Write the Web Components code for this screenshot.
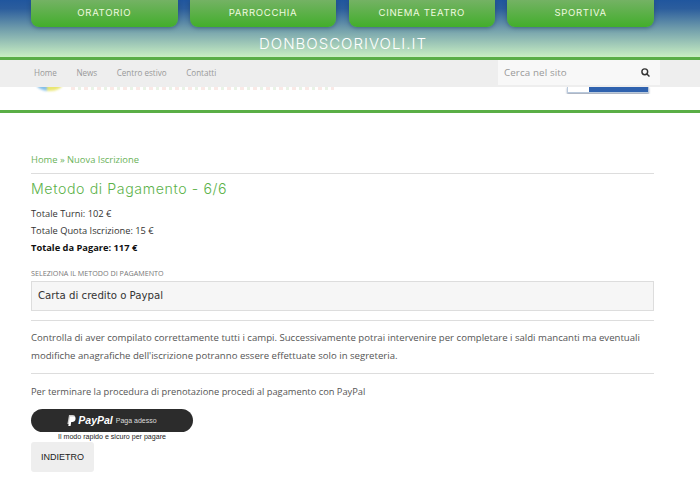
<!DOCTYPE html>
<html lang="it">
<head>
<meta charset="utf-8">
<title>Nuova Iscrizione</title>
<style>
  html, body { margin: 0; background: #fff; }
  body { font-family: "Open Sans", sans-serif; }
</style>
</head>
<body>
<site-top>
  <section-tab>ORATORIO</section-tab>
  <section-tab>PARROCCHIA</section-tab>
  <section-tab>CINEMA TEATRO</section-tab>
  <section-tab>SPORTIVA</section-tab>
</site-top>
<site-nav></site-nav>
<logo-strip></logo-strip>
<payment-page></payment-page>

<script>
class SiteTop extends HTMLElement {
  connectedCallback() {
    this.attachShadow({ mode: 'open' });
    this.shadowRoot.innerHTML = `
      <style>
        :host {
          display: block;
          height: 57px;
          background: linear-gradient(#20569e 0%, #2b5d9d 15%, #6f9cab 50%, #c9efc2 100%);
          border-bottom: 3px solid #5aae46;
        }
        .tabs {
          display: grid;
          grid-template-columns: repeat(4, 146.5px);
          column-gap: 12.3px;
          padding-left: 31px;
        }
        .domain {
          margin-left: 259px;
          margin-top: 8px;
          font: 300 15px/18px "Inter", "DejaVu Sans", sans-serif;
          color: #fff;
          letter-spacing: 1px;
        }
      </style>
      <div class="tabs"><slot></slot></div>
      <div class="domain">DONBOSCORIVOLI.IT</div>
    `;
  }
}

class SectionTab extends HTMLElement {
  connectedCallback() {
    this.attachShadow({ mode: 'open' });
    this.shadowRoot.innerHTML = `
      <style>
        :host {
          display: block;
          height: 27px;
          text-align: center;
          color: #eefadf;
          font: 400 9.6px/25px "Inter", "DejaVu Sans", sans-serif;
          letter-spacing: 0.65px;
          background: linear-gradient(#74b264, #42ae2b);
          border-radius: 0 0 8px 8px;
          box-shadow: 0 1px 4px rgba(30, 60, 90, .55);
        }
      </style>
      <slot></slot>
    `;
  }
}

class SiteNav extends HTMLElement {
  connectedCallback() {
    this.attachShadow({ mode: 'open' });
    this.shadowRoot.innerHTML = `
      <style>
        :host {
          display: flex;
          justify-content: space-between;
          position: relative;
          z-index: 1;
          height: 27px;
          background: #eee;
          padding-left: 34px;
          padding-right: 40px;
          font: 8.1px/25px "Open Sans", sans-serif;
          color: #999;
        }
        nav { display: flex; gap: 19.5px; }
        .search {
          width: 162px;
          height: 25px;
          background: #f8f8f8;
          display: flex;
          justify-content: space-between;
          align-items: center;
          padding: 0 10px 0 6px;
          box-sizing: border-box;
          font-size: 9.8px;
          color: #999;
          letter-spacing: .1px;
        }
        svg { display: block; }
      </style>
      <nav><span>Home</span><span>News</span><span>Centro estivo</span><span>Contatti</span></nav>
      <div class="search">
        <span>Cerca nel sito</span>
        <svg width="9" height="9" viewBox="0 0 10 10" fill="none" stroke="#333" stroke-width="1.6">
          <circle cx="4.2" cy="4.2" r="3.2"/><path d="M6.6 6.6 9.4 9.4"/>
        </svg>
      </div>
    `;
  }
}

class LogoStrip extends HTMLElement {
  connectedCallback() {
    this.attachShadow({ mode: 'open' });
    this.shadowRoot.innerHTML = `
      <style>
        :host {
          display: block;
          height: 23px;
          background: #fff;
          border-bottom: 3px solid #5aae46;
          overflow: hidden;
        }
        .row {
          display: flex;
          align-items: flex-start;
          height: 7px;
          overflow: hidden;
          padding-left: 36px;
          background: #fff;
        }
        .mark {
          width: 27px;
          height: 16px;
          margin-top: -12px;
          border-radius: 50%;
          background: linear-gradient(90deg, #6fb4e6 0 42%, #e5e25a 42% 100%);
          filter: blur(1px);
          opacity: .85;
        }
        .fade {
          margin-left: 8px;
          width: 263px;
          height: 3px;
          background: repeating-linear-gradient(90deg, #fae9e6 0 4px, #fff 4px 7px, #e9f3e6 7px 10px, #fff 10px 13px);
          filter: blur(.6px);
        }
        .btn {
          margin-left: auto;
          margin-right: 51px;
          width: 82px;
          height: 6px;
          display: flex;
          box-sizing: border-box;
          border: 1px solid #b9c9dc;
          border-top: 0;
          box-shadow: 0 1px 2px rgba(70, 90, 120, .6);
          background: #fff;
        }
        .btn i { margin-left: 21px; flex: 1; background: #2f62ae; }
      </style>
      <div class="row">
        <div class="mark"></div>
        <div class="fade"></div>
        <div class="btn"><i></i></div>
      </div>
    `;
  }
}

class PaymentPage extends HTMLElement {
  connectedCallback() {
    this.attachShadow({ mode: 'open' });
    this.shadowRoot.innerHTML = `
      <style>
        :host {
          display: block;
          padding: 40px 46px 0 31px;
          font: 9.6px/18px "Open Sans", sans-serif;
          color: #555;
        }
        .crumbs {
          color: #6bb35a;
          font-size: 9.4px;
          line-height: 14px;
          padding-bottom: 6px;
          border-bottom: 1px solid #ddd;
        }
        h1 {
          margin: 6px 0 7px;
          font: 300 14.2px/18px "Inter", "DejaVu Sans", sans-serif;
          letter-spacing: .6px;
          color: #5cb24a;
        }
        p { margin: 0; }
        .line { line-height: 17px; font-size: 9.3px; color: #333; }
        .total { font-weight: 700; color: #111; }
        label {
          display: block;
          margin-top: 11px;
          font-size: 7.2px;
          line-height: 12px;
          color: #777;
        }
        .select {
          margin-top: 2px;
          height: 30px;
          box-sizing: border-box;
          border: 1px solid #ddd;
          background: #f6f6f6;
          padding-left: 6px;
          font: 10.2px/28px "DejaVu Sans", sans-serif;
          color: #333;
        }
        hr { border: 0; border-top: 1px solid #ddd; margin: 0; }
        .note { margin: 8px 0 9px; line-height: 17.5px; }
        .end { margin-top: 9px; font-size: 9.3px; }
        .pay {
          display: flex;
          align-items: center;
          justify-content: center;
          gap: 3px;
          width: 162px;
          height: 23px;
          margin-top: 8px;
          border-radius: 12px;
          background: #2c2c2c;
          color: #ddd;
          font: 7px/1 "Liberation Sans", sans-serif;
        }
        .pay b {
          color: #fff;
          font: italic 700 10.5px/1 "Liberation Sans", sans-serif;
        }
        .pay svg { display: block; margin-right: -1px; }
        .tag {
          width: 162px;
          text-align: center;
          font: 7.1px/10px "Liberation Sans", sans-serif;
          color: #222;
        }
        button {
          display: block;
          width: 63px;
          height: 30px;
          margin-top: 0;
          padding: 0;
          border: 0;
          border-radius: 3px;
          background: #eee;
          color: #222;
          font: 9px/30px "Liberation Sans", sans-serif;
        }
      </style>
      <div class="crumbs">Home » Nuova Iscrizione</div>
      <h1>Metodo di Pagamento - 6/6</h1>
      <p class="line">Totale Turni: 102 €</p>
      <p class="line">Totale Quota Iscrizione: 15 €</p>
      <p class="line total">Totale da Pagare: 117 €</p>
      <label>SELEZIONA IL METODO DI PAGAMENTO</label>
      <div class="select">Carta di credito o Paypal</div>
      <hr style="margin-top:9px">
      <p class="note">Controlla di aver compilato correttamente tutti i campi. Successivamente potrai intervenire per completare i saldi mancanti ma eventuali modifiche anagrafiche dell'iscrizione potranno essere effettuate solo in segreteria.</p>
      <hr>
      <p class="end">Per terminare la procedura di prenotazione procedi al pagamento con PayPal</p>
      <div class="pay">
        <svg width="9" height="11" viewBox="0 0 9 11" fill="#fff">
          <path d="M2 0h3.6C7.6 0 8.6 1.1 8.3 2.8 8 4.7 6.6 5.8 4.7 5.8H3.5L2.9 9H.4z" opacity=".75"/>
          <path d="M2.9 1.6h3.4c1.6 0 2.5 1 2.2 2.6C8.2 6 7 7 5.3 7H4.2l-.6 4H1.3z"/>
        </svg>
        <b>PayPal</b><span>Paga adesso</span>
      </div>
      <div class="tag">Il modo rapido e sicuro per pagare</div>
      <button type="button">INDIETRO</button>
    `;
  }
}

customElements.define('site-top', SiteTop);
customElements.define('section-tab', SectionTab);
customElements.define('site-nav', SiteNav);
customElements.define('logo-strip', LogoStrip);
customElements.define('payment-page', PaymentPage);
</script>
</body>
</html>
